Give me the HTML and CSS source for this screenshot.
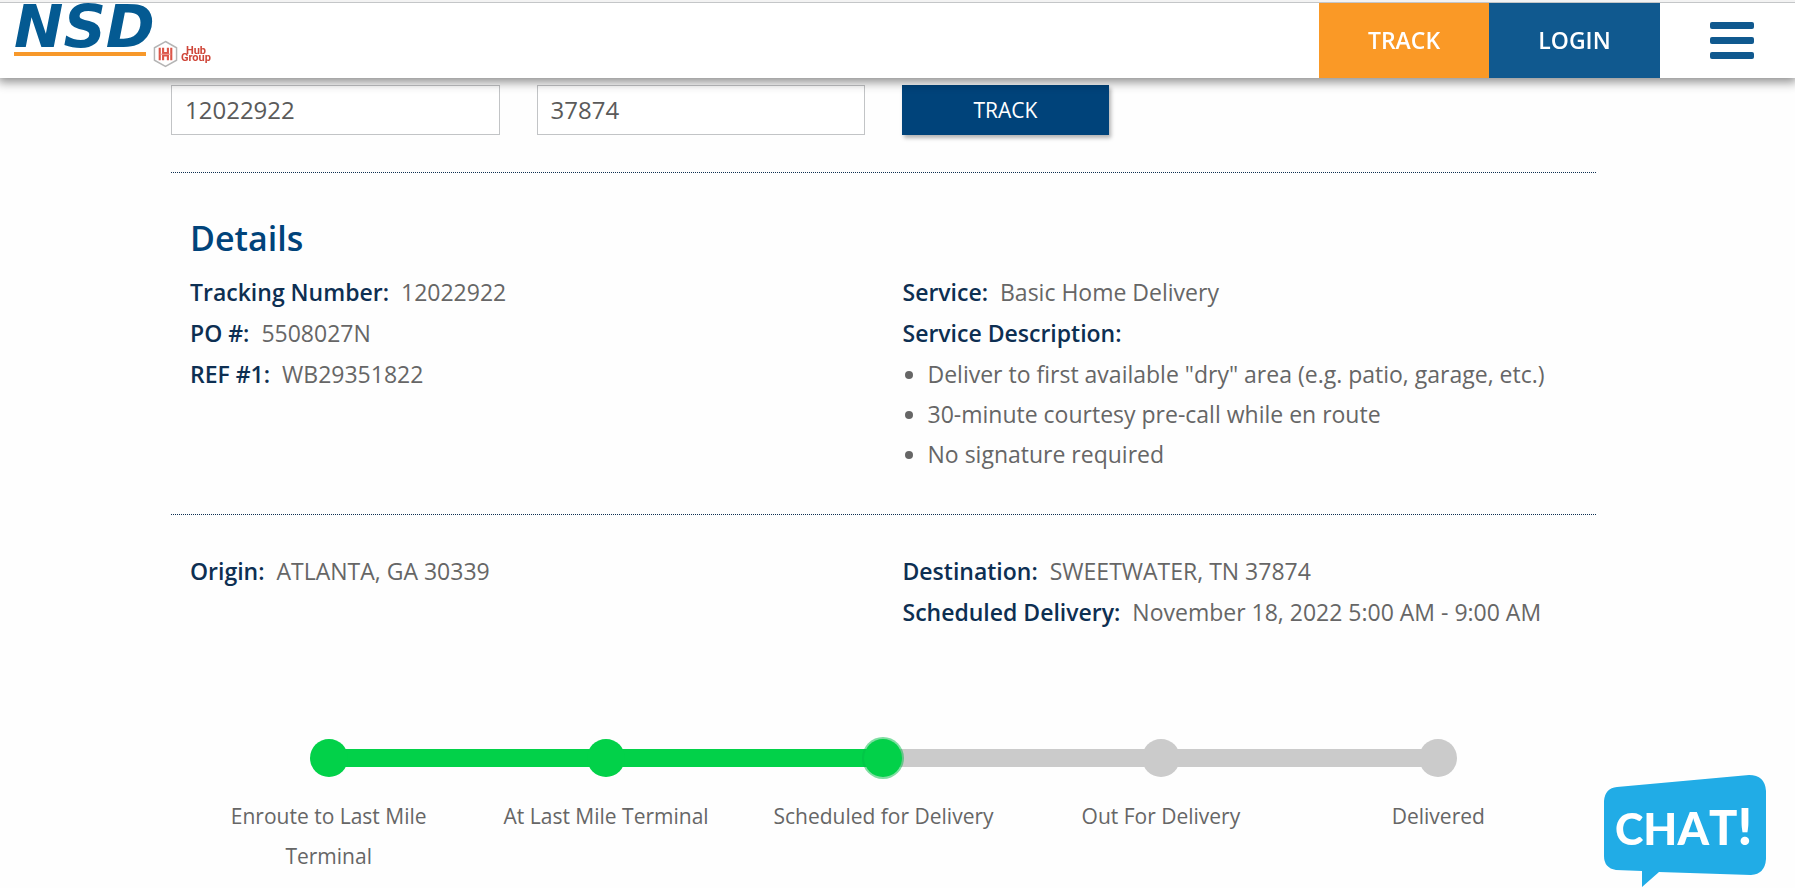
FILE: index.html
```html
<!DOCTYPE html>
<html lang="en">
<head>
<meta charset="utf-8">
<title>NSD Shipment Tracking</title>
<link rel="stylesheet" href="styles.css">
</head>
<body>
<header class="site-header">
  <a class="brand" href="#">
    <span class="brand-nsd">NSD</span>
    <span class="brand-hub">
      <svg class="hub-mark" viewBox="0 0 26 28" aria-hidden="true">
        <path d="M13 1 L24.500 7.500 V20.500 L13 27 L1.500 20.500 V7.500 Z" fill="#fff" stroke="#b5b5b5" stroke-width="1.500"/>
        <path d="M7 7.500V20.500M10.500 7.500V13H15.500V7.500M10.500 20.500V15.500H15.500V20.500M19 7.500V20.500" fill="none" stroke="#dc5548" stroke-width="2.200"/>
        <path d="M7 14.200H19" stroke="#e88a80" stroke-width="1"/>
      </svg>
      <span class="hub-text"><span>Hub</span><span>Group</span></span>
    </span>
  </a>
  <nav class="site-nav">
    <a class="nav-link nav-track" href="#">TRACK</a>
    <a class="nav-link nav-login" href="#">LOGIN</a>
    <button class="menu-button" type="button" aria-label="Menu"><span></span><span></span><span></span></button>
  </nav>
</header>

<main class="page">
  <form class="track-form">
    <div class="field">
      <label for="tracking">Tracking Number</label>
      <input id="tracking" type="text" value="12022922">
    </div>
    <div class="field">
      <label for="zip">Zip</label>
      <input id="zip" type="text" value="37874">
    </div>
    <button class="submit" type="button">TRACK</button>
  </form>

  <section class="block details">
    <div class="column">
      <h2>Details</h2>
      <p><strong>Tracking Number:</strong><span>12022922</span></p>
      <p><strong>PO #:</strong><span>5508027N</span></p>
      <p><strong>REF #1:</strong><span>WB29351822</span></p>
    </div>
    <div class="column">
      <p><strong>Service:</strong><span>Basic Home Delivery</span></p>
      <p><strong>Service Description:</strong></p>
      <ul>
        <li>Deliver to first available "dry" area (e.g. patio, garage, etc.)</li>
        <li>30-minute courtesy pre-call while en route</li>
        <li>No signature required</li>
      </ul>
    </div>
  </section>

  <section class="block route">
    <div class="column">
      <p><strong>Origin:</strong><span>ATLANTA, GA 30339</span></p>
    </div>
    <div class="column">
      <p><strong>Destination:</strong><span>SWEETWATER, TN 37874</span></p>
      <p><strong>Scheduled Delivery:</strong><span>November 18, 2022 5:00 AM - 9:00 AM</span></p>
    </div>
  </section>

  <ol class="steps">
    <li class="step done"><i class="dot"></i><span>Enroute to Last Mile Terminal</span></li>
    <li class="step done"><i class="dot"></i><span>At Last Mile Terminal</span></li>
    <li class="step done current"><i class="dot"></i><span>Scheduled for Delivery</span></li>
    <li class="step"><i class="dot"></i><span>Out For Delivery</span></li>
    <li class="step"><i class="dot"></i><span>Delivered</span></li>
  </ol>
</main>

<button class="chat" type="button">
  <svg viewBox="0 0 164 114">
    <path d="M14 13 L146 1 Q162 1 163 17 V85 Q162 100 148 101 L56 98 L39 113 V97 L13 96 Q1 94 1 82 V27 Q2 14 14 13 Z" fill="#21ace6"/>
    <text x="12" y="71" fill="#fff"><tspan font-size="43">C</tspan><tspan font-size="44">H</tspan><tspan font-size="45">A</tspan><tspan font-size="47">T</tspan><tspan font-size="52">!</tspan></text>
  </svg>
</button>
</body>
</html>
```
FILE: styles.css
```css
* {
  box-sizing: border-box;
}

body {
  margin: 0;
  background: #fefefe;
  color: #666;
  font-family: "Open Sans", sans-serif;
  font-size: 23px;
  line-height: 41px;
}

h2, p, ul, ol {
  margin: 0;
  padding: 0;
}

a {
  text-decoration: none;
}

button, input {
  font-family: inherit;
  border: 0;
}

/* Header */
.site-header {
  position: fixed;
  z-index: 2;
  top: 0;
  left: 0;
  right: 0;
  height: 78px;
  display: flex;
  justify-content: space-between;
  background: #fff;
  border-top: 3px solid #c4c6c8;
  box-shadow: 0 2px 10px 2px rgba(0, 0, 0, 0.45);
}

.site-header::before {
  content: "";
  position: absolute;
  top: -3px;
  left: 0;
  right: 0;
  height: 2px;
  background: #f3f3f3;
}

.brand {
  display: flex;
  align-items: flex-start;
  padding-left: 14px;
}

.brand-nsd {
  width: 132px;
  padding-bottom: 1px;
  border-bottom: 4px solid #f7982a;
  color: #045a92;
  font-family: "DejaVu Sans", sans-serif;
  font-size: 59px;
  font-style: italic;
  font-weight: 700;
  line-height: 48px;
}

.brand-hub {
  display: flex;
  align-items: center;
  gap: 3px;
  padding: 37px 0 0 7px;
}

.hub-mark {
  width: 25px;
  height: 28px;
}

.hub-text {
  display: flex;
  flex-direction: column;
  align-items: center;
  color: #cf4639;
  font-family: Roboto, sans-serif;
  font-size: 11px;
  font-weight: 700;
  line-height: 7px;
}

.site-nav {
  display: flex;
}

.nav-link {
  width: 170px;
  padding-bottom: 1px;
  display: flex;
  align-items: center;
  justify-content: center;
  color: #fff;
  font-size: 23px;
  font-weight: 600;
}

.nav-track {
  background: #fa9926;
}

.nav-login {
  width: 171px;
  background: #10598f;
}

.menu-button {
  width: 135px;
  padding: 0 41px 0 50px;
  display: flex;
  flex-direction: column;
  justify-content: center;
  gap: 8px;
  background: none;
}

.menu-button span {
  width: 44px;
  height: 7px;
  border-radius: 2px;
  background: #10598f;
}

/* Tracking form */
.page {
  padding: 52px 199px 0 171px;
}

.track-form {
  display: grid;
  grid-template-columns: repeat(4, 1fr);
  align-items: end;
  gap: 37px;
  padding-bottom: 37px;
}

.field {
  display: flex;
  flex-direction: column;
  gap: 5px;
}

.field label {
  color: #0d2f52;
  font-size: 20px;
  font-weight: 600;
  line-height: 28px;
}

.field input {
  width: 100%;
  height: 50px;
  padding: 0 13px 2px;
  border: 1px solid #c2c4c6;
  background: #fff;
  color: #5a5a5a;
  font-size: 24px;
}

.submit {
  width: 207px;
  height: 50px;
  padding-bottom: 2px;
  background: #00437a;
  box-shadow: 2px 3px 4px rgba(0, 0, 0, 0.3);
  color: #fff;
  font-size: 21px;
}

/* Shipment information */
.block {
  display: grid;
  grid-template-columns: 1fr 1fr;
  align-items: start;
  border-top: 1px dotted #0d2f52;
}

.details {
  padding: 45px 0 40px;
}

.details .column:last-child {
  padding-top: 54px;
}

.route {
  padding-top: 36px;
}

.column {
  padding-left: 19px;
}

.column h2 {
  margin-bottom: 14px;
  color: #00437a;
  font-size: 34px;
  font-weight: 600;
  line-height: 40px;
}

.column p {
  display: flex;
  gap: 12px;
}

.column strong {
  color: #0d2f52;
  font-weight: 600;
}

.column ul {
  padding-left: 25px;
  line-height: 40px;
}

/* Delivery progress */
.steps {
  display: grid;
  grid-template-columns: repeat(5, 1fr);
  padding: 106px 19px 0;
  list-style: none;
}

.step {
  position: relative;
  display: flex;
  flex-direction: column;
  align-items: center;
  gap: 19px;
  padding: 0 20px;
  font-size: 21px;
  line-height: 40px;
  text-align: center;
}

.dot {
  position: relative;
  z-index: 1;
  width: 38px;
  height: 38px;
  border-radius: 50%;
  background: #cbcbcb;
}

.step + .step::before {
  content: "";
  position: absolute;
  top: 10px;
  left: -50%;
  width: 100%;
  height: 18px;
  background: #cbcbcb;
}

.step.done .dot,
.step.done::before {
  background: #02d149;
}

.step.current .dot {
  box-shadow: 0 0 0 2px rgba(2, 190, 70, 0.5);
}

/* Chat launcher */
.chat {
  position: fixed;
  right: 28px;
  bottom: 0;
  width: 164px;
  height: 114px;
  padding: 0;
  background: none;
}

.chat svg {
  display: block;
}

.chat text {
  font-family: Lato, sans-serif;
  font-weight: 900;
}
```
